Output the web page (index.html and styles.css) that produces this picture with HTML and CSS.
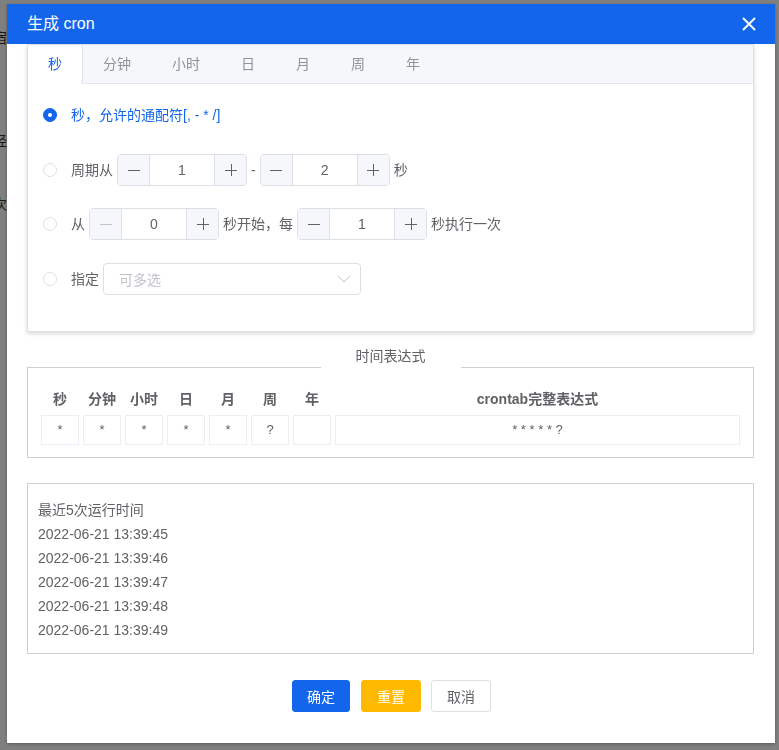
FILE: index.html
```html
<!DOCTYPE html>
<html lang="zh-CN">
<head>
<meta charset="utf-8">
<title>生成 cron</title>
<link rel="stylesheet" href="styles.css">
</head>
<body>
<div class="page">
  <p class="bg-line l1">宿舍</p>
  <p class="bg-line l2">经费</p>
  <p class="bg-line l3">次数</p>
</div>
<div class="overlay">
  <div class="dialog">
    <div class="dlg-header">
      <span class="dlg-title">生成 cron</span>
      <svg class="close" width="14" height="14" viewBox="0 0 14 14"><path d="M1 1 L13 13 M13 1 L1 13" stroke="#fff" stroke-width="1.8" fill="none"/></svg>
    </div>
    <div class="dlg-body">
      <div class="card">
        <div class="tabs">
          <div class="tab active">秒</div>
          <div class="tab">分钟</div>
          <div class="tab">小时</div>
          <div class="tab">日</div>
          <div class="tab">月</div>
          <div class="tab">周</div>
          <div class="tab">年</div>
        </div>
        <div class="card-body">
          <div class="row">
            <span class="radio checked"></span>
            <span class="lbl active-lbl">秒，允许的通配符[, - * /]</span>
          </div>
          <div class="row">
            <span class="radio"></span>
            <span class="lbl">周期从</span>
            <div class="num">
              <span class="num-btn dec"><svg width="12" height="12" viewBox="0 0 12 12"><path d="M0 6.5 H12" stroke="currentColor" stroke-width="1"/></svg></span>
              <span class="num-val">1</span>
              <span class="num-btn inc"><svg width="12" height="12" viewBox="0 0 12 12"><path d="M0 6.5 H12 M6.5 0 V12" stroke="currentColor" stroke-width="1"/></svg></span>
            </div>
            <span class="lbl">-</span>
            <div class="num">
              <span class="num-btn dec"><svg width="12" height="12" viewBox="0 0 12 12"><path d="M0 6.5 H12" stroke="currentColor" stroke-width="1"/></svg></span>
              <span class="num-val">2</span>
              <span class="num-btn inc"><svg width="12" height="12" viewBox="0 0 12 12"><path d="M0 6.5 H12 M6.5 0 V12" stroke="currentColor" stroke-width="1"/></svg></span>
            </div>
            <span class="lbl">秒</span>
          </div>
          <div class="row">
            <span class="radio"></span>
            <span class="lbl">从</span>
            <div class="num">
              <span class="num-btn dec disabled"><svg width="12" height="12" viewBox="0 0 12 12"><path d="M0 6.5 H12" stroke="currentColor" stroke-width="1"/></svg></span>
              <span class="num-val">0</span>
              <span class="num-btn inc"><svg width="12" height="12" viewBox="0 0 12 12"><path d="M0 6.5 H12 M6.5 0 V12" stroke="currentColor" stroke-width="1"/></svg></span>
            </div>
            <span class="lbl">秒开始，每</span>
            <div class="num">
              <span class="num-btn dec"><svg width="12" height="12" viewBox="0 0 12 12"><path d="M0 6.5 H12" stroke="currentColor" stroke-width="1"/></svg></span>
              <span class="num-val">1</span>
              <span class="num-btn inc"><svg width="12" height="12" viewBox="0 0 12 12"><path d="M0 6.5 H12 M6.5 0 V12" stroke="currentColor" stroke-width="1"/></svg></span>
            </div>
            <span class="lbl">秒执行一次</span>
          </div>
          <div class="row last">
            <span class="radio"></span>
            <span class="lbl">指定</span>
            <div class="select">
              <span class="placeholder">可多选</span>
              <svg width="14" height="14" viewBox="0 0 14 14"><path d="M1.5 4.5 L7 10 L12.5 4.5" stroke="#c0c4cc" stroke-width="1" fill="none"/></svg>
            </div>
          </div>
        </div>
      </div>

      <fieldset class="expr">
        <legend>时间表达式</legend>
        <div class="expr-grid">
          <div class="eh">秒</div>
          <div class="eh">分钟</div>
          <div class="eh">小时</div>
          <div class="eh">日</div>
          <div class="eh">月</div>
          <div class="eh">周</div>
          <div class="eh">年</div>
          <div class="eh">crontab完整表达式</div>
          <div class="ec">*</div>
          <div class="ec">*</div>
          <div class="ec">*</div>
          <div class="ec">*</div>
          <div class="ec">*</div>
          <div class="ec">?</div>
          <div class="ec"></div>
          <div class="ec">* * * * * ?</div>
        </div>
      </fieldset>

      <div class="result">
        <div class="res-line">最近5次运行时间</div>
        <div class="res-line">2022-06-21 13:39:45</div>
        <div class="res-line">2022-06-21 13:39:46</div>
        <div class="res-line">2022-06-21 13:39:47</div>
        <div class="res-line">2022-06-21 13:39:48</div>
        <div class="res-line">2022-06-21 13:39:49</div>
      </div>

      <div class="footer">
        <button class="btn primary">确定</button>
        <button class="btn warning">重置</button>
        <button class="btn plain">取消</button>
      </div>
    </div>
  </div>
</div>
</body>
</html>
```
FILE: styles.css
```css
* { box-sizing: border-box; }

html, body { margin: 0; height: 100%; }

body {
  font-family: "Liberation Sans", "Noto Sans CJK SC", sans-serif;
  font-size: 14px;
  color: #606266;
  background: #fff;
  overflow: hidden;
}

.page { padding-top: 30px; }
.bg-line {
  margin: 0 0 0 -7px;
  font-size: 14px;
  line-height: 16px;
  color: #333;
}
.l2 { margin-top: 87px; }
.l3 { margin-top: 47px; }

.overlay {
  position: fixed;
  inset: 0;
  background: rgba(0, 0, 0, 0.5);
  padding: 4px 0 0 7px;
}

.dialog {
  width: 768px;
  height: 739px;
  background: #fff;
  box-shadow: 0 1px 3px rgba(0, 0, 0, 0.3);
}

.dlg-header {
  height: 40px;
  background: #1366ec;
  padding: 0 19px 0 20px;
  display: flex;
  align-items: center;
  justify-content: space-between;
}
.dlg-title {
  color: #fff;
  font-size: 16px;
  line-height: 20px;
}
.close { display: block; }

.dlg-body { padding: 0 21px 0 20px; }

.card {
  border: 1px solid #dcdfe6;
  background: #fff;
  box-shadow: 0 2px 4px rgba(0, 0, 0, 0.12), 0 0 6px rgba(0, 0, 0, 0.04);
}

.tabs {
  display: flex;
  height: 39px;
  background: #f5f7fa;
  border-bottom: 1px solid #e4e7ed;
}
.tab {
  padding: 0 20px;
  height: 39px;
  line-height: 38px;
  color: #909399;
  font-size: 14px;
  border-right: 1px solid transparent;
}
.tab.active {
  background: #fff;
  color: #1366ec;
  border-right-color: #dcdfe6;
}

.card-body { padding: 15px; }

.row {
  display: flex;
  align-items: center;
  height: 32px;
  margin-bottom: 22.5px;
  gap: 4px;
}
.row.last { margin-bottom: 21px; }

.radio {
  width: 14px;
  height: 14px;
  border: 1px solid #dcdfe6;
  border-radius: 50%;
  background: #fff;
  margin-right: 10px;
  flex: none;
  display: flex;
  align-items: center;
  justify-content: center;
}
.radio.checked {
  background: #1366ec;
  border-color: #1366ec;
}
.radio.checked::after {
  content: "";
  width: 4px;
  height: 4px;
  border-radius: 50%;
  background: #fff;
}

.lbl {
  font-size: 14px;
  line-height: 20px;
  color: #606266;
  white-space: nowrap;
}
.active-lbl { color: #1366ec; }

.num {
  width: 130px;
  height: 32px;
  border: 1px solid #dcdfe6;
  border-radius: 4px;
  display: flex;
  overflow: hidden;
  background: #fff;
}
.num-btn {
  width: 32px;
  flex: none;
  background: #f5f7fa;
  color: #606266;
  display: flex;
  align-items: center;
  justify-content: center;
}
.num-btn.dec { border-right: 1px solid #dcdfe6; }
.num-btn.inc { border-left: 1px solid #dcdfe6; }
.num-btn.disabled { color: #c0c4cc; }
.num-btn svg { display: block; }
.num-val {
  flex: 1;
  text-align: center;
  line-height: 30px;
  color: #606266;
  font-size: 14px;
}

.select {
  width: 258px;
  height: 32px;
  border: 1px solid #dcdfe6;
  border-radius: 4px;
  display: flex;
  align-items: center;
  justify-content: space-between;
  padding: 0 9px 0 15px;
}
.placeholder { color: #c0c4cc; font-size: 14px; }
.select svg { display: block; }

.expr {
  margin: 12px 0 0 0;
  padding: 0 13px 12px 13px;
  border: 1px solid #cfcfcf;
  min-width: 0;
}
.expr legend {
  margin: 0 auto;
  padding: 0 35px 24px;
  line-height: 24px;
  font-size: 14px;
  color: #606266;
}

.expr-grid {
  display: grid;
  grid-template-columns: repeat(7, 38px) 1fr;
  column-gap: 4px;
  row-gap: 9px;
}
.eh {
  text-align: center;
  font-weight: bold;
  font-size: 14px;
  line-height: 14px;
  color: #606266;
}
.ec {
  height: 30px;
  border: 1px solid #ebeef5;
  text-align: center;
  line-height: 28px;
  font-size: 13px;
  color: #606266;
}

.result {
  margin-top: 25px;
  border: 1px solid #cfcfcf;
  padding: 14px 10px 11px 10px;
}
.res-line {
  line-height: 24px;
  font-size: 14px;
  color: #606266;
}

.footer {
  margin-top: 26px;
  padding-left: 2px;
  display: flex;
  justify-content: center;
}
.btn {
  height: 32px;
  width: 60px;
  padding: 0;
  border: 1px solid #dcdfe6;
  border-radius: 3px;
  font-family: "Liberation Sans", "Noto Sans CJK SC", sans-serif;
  font-size: 14px;
  margin-left: 10px;
  background: #fff;
  color: #606266;
}
.btn.primary {
  width: 58px;
  margin-left: 0;
  margin-right: 1px;
  background: #1366ec;
  border-color: #1366ec;
  color: #fff;
}
.btn.warning {
  background: #ffba00;
  border-color: #ffba00;
  color: #fff;
}
```
